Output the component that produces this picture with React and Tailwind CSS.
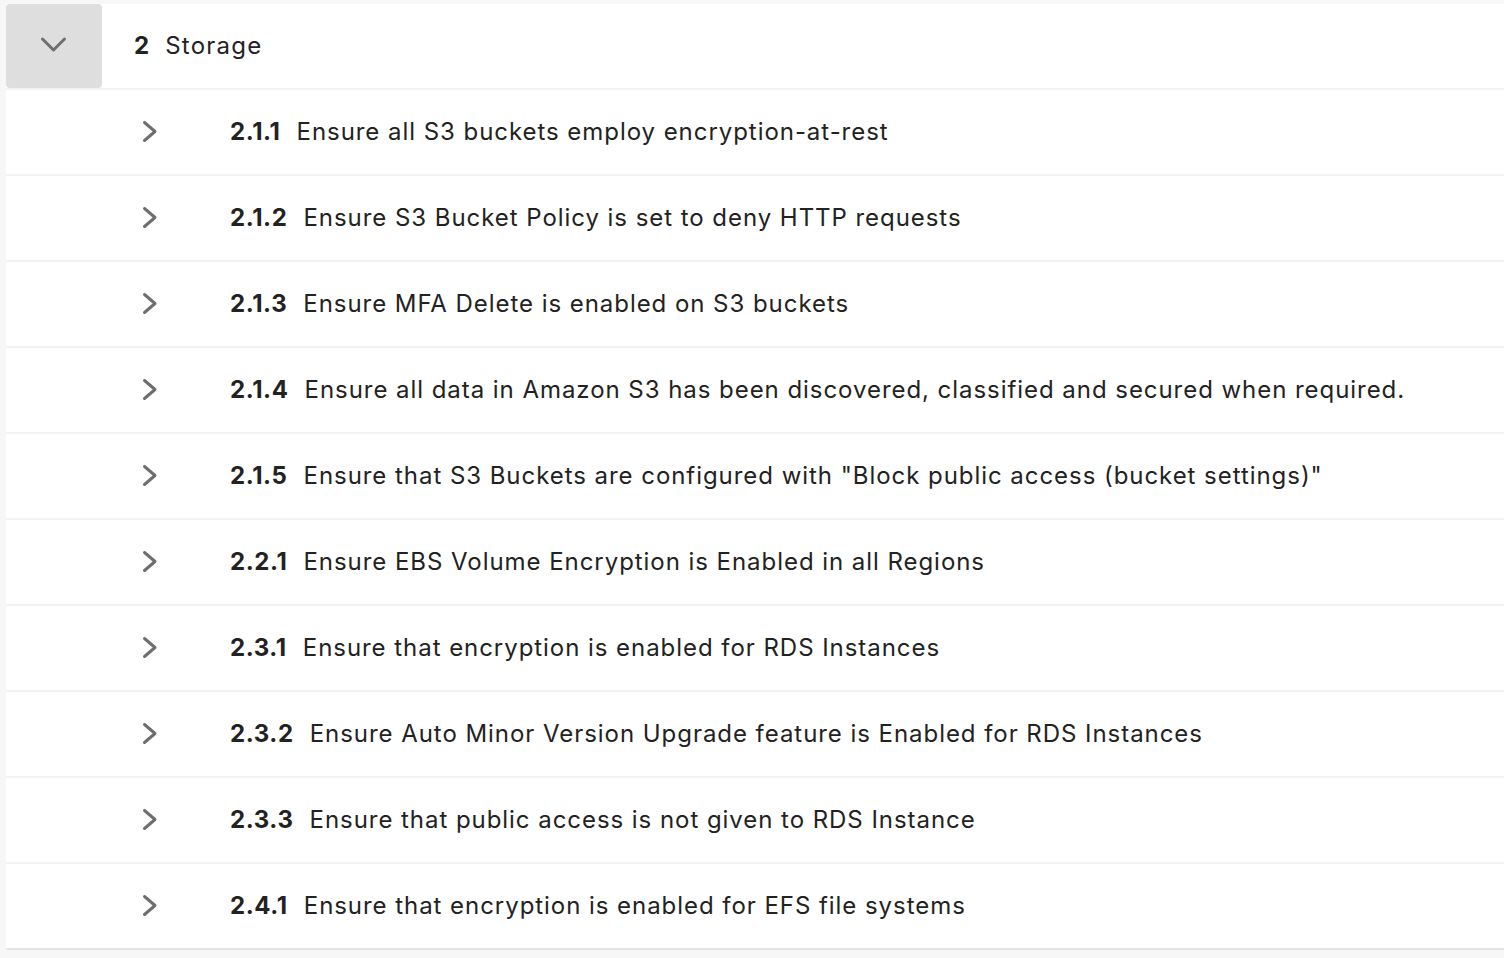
const ROWS = [
  ['2.1.1', 'Ensure all S3 buckets employ encryption-at-rest'],
  ['2.1.2', 'Ensure S3 Bucket Policy is set to deny HTTP requests'],
  ['2.1.3', 'Ensure MFA Delete is enabled on S3 buckets'],
  ['2.1.4', 'Ensure all data in Amazon S3 has been discovered, classified and secured when required.'],
  ['2.1.5', 'Ensure that S3 Buckets are configured with "Block public access (bucket settings)"'],
  ['2.2.1', 'Ensure EBS Volume Encryption is Enabled in all Regions'],
  ['2.3.1', 'Ensure that encryption is enabled for RDS Instances'],
  ['2.3.2', 'Ensure Auto Minor Version Upgrade feature is Enabled for RDS Instances'],
  ['2.3.3', 'Ensure that public access is not given to RDS Instance'],
  ['2.4.1', 'Ensure that encryption is enabled for EFS file systems'],
];

function ChevronRight() {
  return (
    <svg width="20" height="24" viewBox="0 0 20 24" fill="none" className="shrink-0">
      <path d="M4.5 2.5 L15 11.5 L4.5 20.5" stroke="#6e6e6e" strokeWidth="3" strokeLinecap="round" strokeLinejoin="round" />
    </svg>
  );
}

function ChevronDown() {
  return (
    <svg width="28" height="20" viewBox="0 0 28 20" fill="none">
      <path d="M2.5 3 L13.5 14 L24.5 3" stroke="#6e6e6e" strokeWidth="3" strokeLinecap="round" strokeLinejoin="round" />
    </svg>
  );
}

export default function App() {
  return (
    <div
      className="min-h-[958px] bg-[#f7f7f8] pt-[4px] pl-[6px] text-[#222222]"
      style={{ fontFamily: 'Inter, "Noto Sans", sans-serif' }}
    >
      <div className="bg-white border-b-2 border-[#e4e4e4]">
        {/* Section header */}
        <div className="flex items-center h-[84px]">
          <div className="w-[96px] h-full bg-[#dedede] rounded flex items-center justify-center">
            <ChevronDown />
          </div>
          <div className="ml-8 flex items-center gap-4 text-[24px]">
            <span className="font-bold">2</span>
            <span className="tracking-[1.25px]">Storage</span>
          </div>
        </div>

        {/* Items */}
        {ROWS.map(([num, title]) => (
          <div key={num} className="flex items-center h-[86px] border-t-2 border-[#f3f3f3] pl-[134px]">
            <ChevronRight />
            <div className="ml-[70px] flex items-center gap-4 text-[24px] whitespace-nowrap">
              <span className="font-bold tracking-[0.6px]">{num}</span>
              <span className="tracking-[0.95px]">{title}</span>
            </div>
          </div>
        ))}
      </div>
    </div>
  );
}
